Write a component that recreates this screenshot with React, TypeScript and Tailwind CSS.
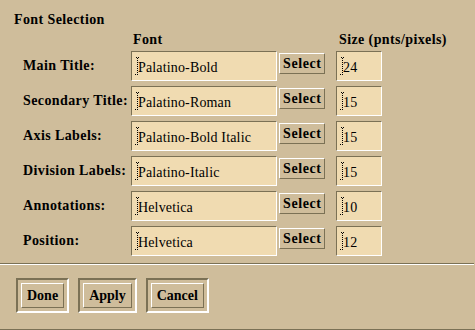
import React from "react";

const rows = [
  { label: "Main Title:", font: "Palatino-Bold", size: "24" },
  { label: "Secondary Title:", font: "Palatino-Roman", size: "15" },
  { label: "Axis Labels:", font: "Palatino-Bold Italic", size: "15" },
  { label: "Division Labels:", font: "Palatino-Italic", size: "15" },
  { label: "Annotations:", font: "Helvetica", size: "10" },
  { label: "Position:", font: "Helvetica", size: "12" },
];

function Cursor() {
  // stippled I-beam of an unfocused text field
  return (
    <svg width="4" height="18" viewBox="0 0 4 18" className="shrink-0" shapeRendering="crispEdges">
      <rect x="1" y="0" width="1" height="1" fill="#000" />
      <rect x="3" y="0" width="1" height="1" fill="#000" />
      {[2, 4, 6, 8, 10, 12, 14, 16].map((y) => (
        <rect key={y} x="2" y={y - 1} width="1" height="1" fill="#000" />
      ))}
      <rect x="0" y="17" width="1" height="1" fill="#000" />
      <rect x="2" y="17" width="1" height="1" fill="#000" />
    </svg>
  );
}

function TextField(props: { value: string; width: string }) {
  return (
    <div
      className={`${props.width} flex h-[30px] items-start border border-t-[#7b7155] border-l-[#7b7155] border-b-white border-r-white bg-[#f0dbb1] pl-[3px] pt-[5px]`}
    >
      <Cursor />
      <span className="-ml-[1px] mt-[3px] whitespace-nowrap text-[14px] leading-4 tracking-[0.15px] text-black">
        {props.value}
      </span>
    </div>
  );
}

function DialogButton(props: { label: string }) {
  return (
    <div className="border-2 border-t-[#7b7155] border-l-[#7b7155] border-b-white border-r-white p-[3px]">
      <div className="flex h-[25px] items-center border border-t-white border-l-white border-b-[#7b7155] border-r-[#7b7155] px-[5px] text-[14px] font-bold leading-4">
        {props.label}
      </div>
    </div>
  );
}

export default function App() {
  return (
    <div className="flex h-[330px] w-[475px] flex-col border-b border-b-[#7b7155] bg-[#cfbd9b] font-['Liberation_Serif','Times_New_Roman',serif] text-black">
      <div className="pl-[14px] pt-[12px] text-[14px] font-bold leading-4 tracking-[0.4px]">Font Selection</div>

      <div className="mt-[4px] flex pl-[23px] text-[14px] font-bold leading-4 tracking-[0.4px]">
        <div className="w-[108px]" />
        <div className="w-[146px] pl-[2px]">Font</div>
        <div className="w-[59px]" />
        <div className="whitespace-nowrap pl-[3px]">Size (pnts/pixels)</div>
      </div>

      <div className="mt-[3px] flex flex-col gap-[5px] pl-[23px]">
        {rows.map((row) => (
          <div key={row.label} className="flex h-[30px] items-center">
            <div className="w-[108px] whitespace-nowrap text-[14px] font-bold leading-4 tracking-[0.4px]">
              {row.label}
            </div>
            <TextField value={row.font} width="w-[146px]" />
            <div className="ml-[2px] mt-[2px] flex h-[21px] w-[46px] items-center self-start border border-t-white border-l-white border-b-[#7b7155] border-r-[#7b7155] pl-[3px] text-[14px] font-bold leading-4 tracking-[0.6px]">
              Select
            </div>
            <div className="ml-[11px]">
              <TextField value={row.size} width="w-[46px]" />
            </div>
          </div>
        ))}
      </div>

      <div className="mt-[7px] h-[2px] w-[474px] border-t border-t-[#7b7155] border-b border-b-white" />

      <div className="mt-[13px] flex gap-[9px] pl-[16px]">
        <DialogButton label="Done" />
        <DialogButton label="Apply" />
        <DialogButton label="Cancel" />
      </div>
    </div>
  );
}
